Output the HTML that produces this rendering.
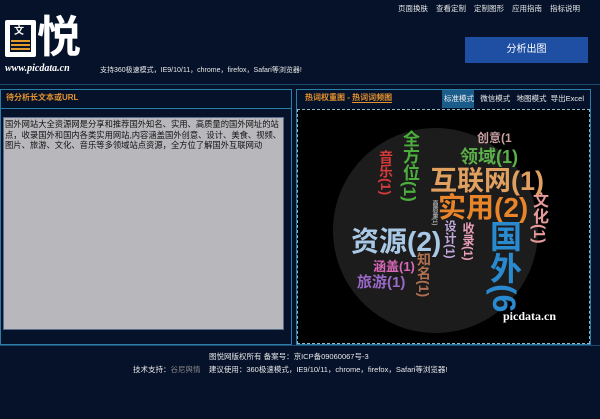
<!DOCTYPE html>
<html><head><meta charset="utf-8"><style>
*{margin:0;padding:0;box-sizing:border-box}
body{width:600px;height:419px;background:#06122a;font-family:"Liberation Sans","Noto Sans CJK SC",sans-serif;position:relative;overflow:hidden;color:#fff}
.a{position:absolute;white-space:nowrap;line-height:1}
.v{writing-mode:vertical-rl;font-weight:bold}
.w{font-weight:bold}
.n{position:absolute;top:5px;font-size:7.5px;color:#e8e8e8;line-height:1}
</style></head><body>
<div class="n" style="left:398px">页面换肤</div>
<div class="n" style="left:436px">查看定制</div>
<div class="n" style="left:474px">定制图形</div>
<div class="n" style="left:512px">应用指南</div>
<div class="n" style="left:550px">指标说明</div>
<!-- logo -->
<div class="a" style="left:5px;top:20px;width:31px;height:37px;background:#fff;border-radius:2px"></div>
<div class="a" style="left:10px;top:25px;width:21px;height:27px;background:#06122a"></div>
<div class="a" style="left:14px;top:27px;font-size:10px;color:#fff;font-weight:bold">文</div>
<div class="a" style="left:11px;top:40px;width:19px;height:2px;background:#e39a2a"></div>
<div class="a" style="left:11px;top:44px;width:19px;height:2px;background:#e39a2a"></div>
<div class="a" style="left:11px;top:48px;width:19px;height:2px;background:#e39a2a"></div>
<div class="a" style="left:37px;top:16px;font-size:44px;font-weight:bold;color:#fff;letter-spacing:-2px">悦</div>
<div class="a" style="left:5px;top:64px;font-family:'Liberation Serif',serif;font-style:italic;font-weight:bold;font-size:10px;color:#fff">www.picdata.cn</div>
<div class="a" style="left:100px;top:67px;font-size:7px;color:#e8e8e8">支持360极速模式，IE9/10/11，chrome，firefox，Safari等浏览器!</div>
<div class="a" style="left:465px;top:37px;width:123px;height:26px;background:#1f4fa2;font-size:10px;color:#fff;text-align:center;line-height:26px">分析出图</div>
<div class="a" style="left:0;top:84px;width:600px;height:1px;background:#1a4a6e"></div>
<!-- left panel -->
<div class="a" style="left:0;top:89px;width:292px;height:256px;border:1px solid #2a7fa8"></div>
<div class="a" style="left:0;top:108px;width:292px;height:1px;background:#2a7fa8"></div>
<div class="a" style="left:6px;top:94px;font-size:8px;color:#e6932e;font-weight:bold">待分析长文本或URL</div>
<div class="a" style="left:3px;top:117px;width:281px;height:213px;background:#b8b8bc;border:1px solid #5a6c8c"></div>
<div class="a" style="left:5px;top:119px;width:280px;white-space:normal;font-size:8.3px;line-height:10.5px;color:#111">国外网站大全资源网是分享和推荐国外知名、实用、高质量的国外网址的站点，收录国外和国内各类实用网站,内容涵盖国外创意、设计、美食、视频、图片、旅游、文化、音乐等多领域站点资源，全方位了解国外互联网动</div>
<!-- right panel -->
<div class="a" style="left:296px;top:89px;width:295px;height:256px;border:1px solid #2a7fa8"></div>
<div class="a" style="left:305px;top:94px;font-size:8px;color:#e6932e;font-weight:bold">热词权重图 - <span style="border-bottom:1px solid #e6932e">热词词频图</span></div>
<div class="a" style="left:442px;top:90px;width:32px;height:18px;background:#1a5c8a"></div>
<div class="a" style="left:444px;top:95px;font-size:7.5px;color:#eee">标准模式&nbsp;&nbsp;&nbsp;微信模式&nbsp;&nbsp;&nbsp;地图模式&nbsp;&nbsp;导出Excel</div>
<div class="a" style="left:297px;top:109px;width:293px;height:235px;background:#000;border:1px dashed #8ab8cc"></div>
<div class="a" style="left:333px;top:128px;width:205px;height:205px;border-radius:50%;background:#1c1c1c"></div>
<div class="a w" style="left:477px;top:132px;font-size:12px;color:#c8a0a0">创意(1</div>
<div class="a w" style="left:460px;top:148px;font-size:18px;color:#5cb04a">领域(1)</div>
<div class="a v" style="left:401px;top:130px;font-size:17px;color:#4caf3e">全方位(1)</div>
<div class="a v" style="left:379px;top:150px;font-size:14px;color:#d43a3a">音乐(1)</div>
<div class="a w" style="left:430px;top:168px;font-size:27px;color:#e0a060">互联网(1)</div>
<div class="a w" style="left:438px;top:194px;font-size:28px;color:#e8852a">实用(2)</div>
<div class="a v" style="left:530px;top:192px;font-size:16px;color:#e79a9a">文化(1)</div>
<div class="a v" style="left:431px;top:200px;font-size:6px;color:#aaa">高质量(1)</div>
<div class="a w" style="left:351px;top:228px;font-size:28px;color:#a9c8e6">资源(2)</div>
<div class="a v" style="left:444px;top:220px;font-size:12px;color:#c0a8dc">设计(1)</div>
<div class="a v" style="left:462px;top:222px;font-size:12px;color:#e8a0b8">收录(1)</div>
<div class="a v" style="left:488px;top:220px;font-size:32px;color:#2a8ad0">国外(6</div>
<div class="a v" style="left:417px;top:252px;font-size:14px;color:#b07050">知名(1)</div>
<div class="a w" style="left:373px;top:260px;font-size:13px;color:#d868b8">涵盖(1)</div>
<div class="a w" style="left:357px;top:275px;font-size:15px;color:#9a68c8">旅游(1)</div>
<div class="a" style="left:503px;top:310px;font-family:'Liberation Serif',serif;font-weight:bold;font-size:12px;color:#fff">picdata.cn</div>
<!-- footer -->
<div class="a" style="left:0;top:345px;width:600px;height:1px;background:#1a4a6e"></div>
<div class="a" style="left:209px;top:353px;font-size:7.5px;color:#e8e8e8">图悦网版权所有 备案号：京ICP备09060067号-3</div>
<div class="a" style="left:133px;top:366px;font-size:7.5px;color:#e8e8e8">技术支持：<span style="color:#888">谷尼舆情</span>&nbsp;&nbsp;&nbsp;&nbsp;建议使用：360极速模式，IE9/10/11，chrome，firefox，Safari等浏览器!</div>
</body></html>
